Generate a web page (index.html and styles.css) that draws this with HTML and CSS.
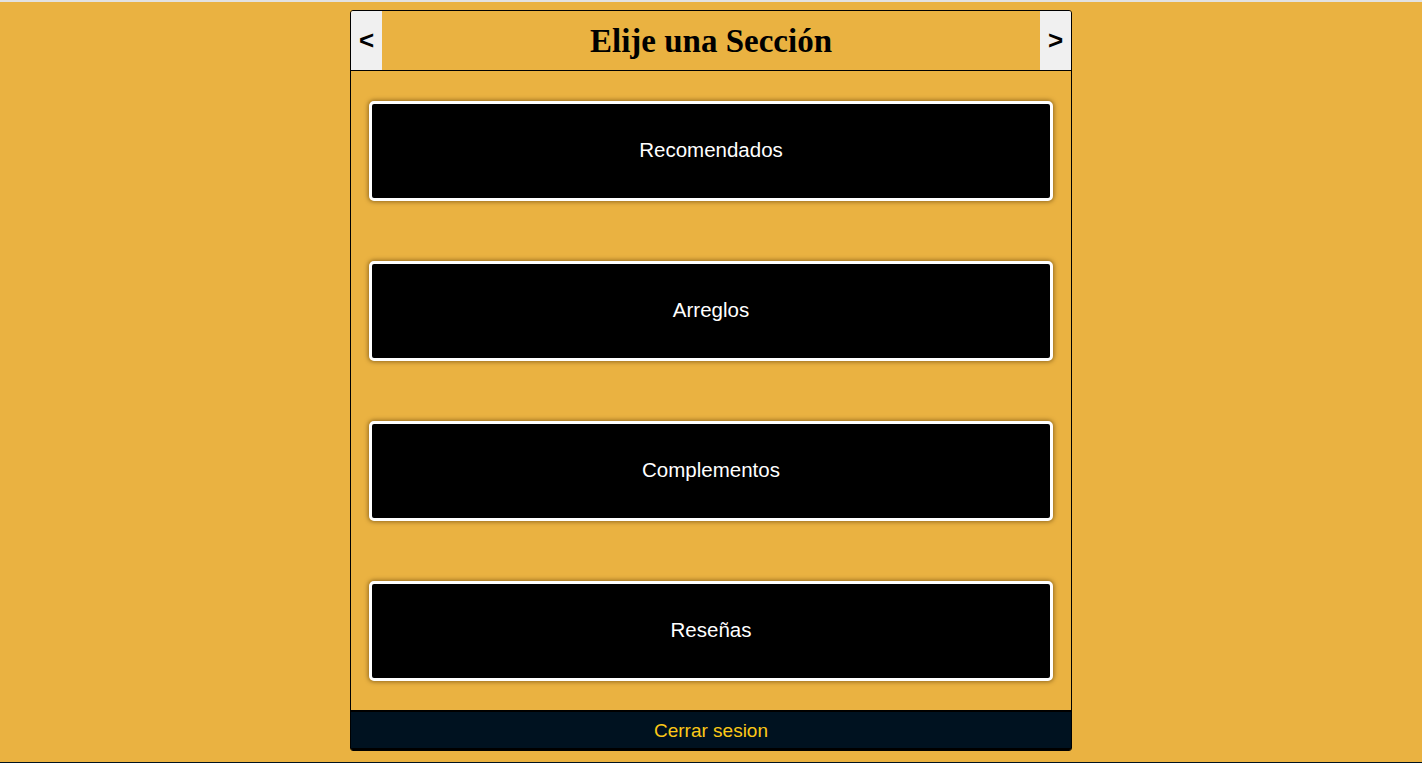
FILE: index.html
```html
<!DOCTYPE html>
<html lang="es">
<head>
<meta charset="utf-8">
<title>Elije una Sección</title>
<link rel="stylesheet" href="styles.css">
</head>
<body>
<div class="panel">
  <header class="panel-head">
    <button class="nav-btn">&lt;</button>
    <h1 class="title">Elije una Sección</h1>
    <button class="nav-btn">&gt;</button>
  </header>
  <main class="sections">
    <button class="section-btn">Recomendados</button>
    <button class="section-btn">Arreglos</button>
    <button class="section-btn">Complementos</button>
    <button class="section-btn">Reseñas</button>
  </main>
  <footer class="panel-foot">
    <a class="logout" href="#">Cerrar sesion</a>
  </footer>
</div>
</body>
</html>
```
FILE: styles.css
```css
* { box-sizing: border-box; }
html { background: #eab241; }
body {
  margin: 0;
  height: 763px;
  background: #eab241;
  border-top: 2px solid #e2e2e2;
  border-bottom: 1px solid #001220;
  font-family: "Liberation Sans", Arial, sans-serif;
  padding-top: 8px;
}
.panel {
  width: 722px;
  margin: 0 auto;
  border: 1px solid #000;
  border-radius: 3px;
  display: flex;
  flex-direction: column;
  overflow: hidden;
}
.panel-head {
  height: 60px;
  display: flex;
  align-items: stretch;
  border-bottom: 1px solid #000;
}
.nav-btn {
  width: 31px;
  border: none;
  background: #f0f0f0;
  font-family: "Liberation Sans", Arial, sans-serif;
  font-weight: bold;
  font-size: 26px;
  color: #000;
  padding: 0;
}
.title {
  flex: 1;
  margin: 0;
  padding-top: 2px;
  text-align: center;
  font-family: "Liberation Serif", "Times New Roman", serif;
  font-size: 33px;
  font-weight: bold;
  line-height: 57px;
}
.sections {
  display: flex;
  flex-direction: column;
  align-items: center;
  gap: 60px;
  padding: 30px 0 29px;
}
.section-btn {
  width: 684px;
  height: 100px;
  background: #000;
  color: #fff;
  border: 3px solid #fff;
  border-radius: 5px;
  box-shadow: 0 0 4px 1px rgba(80, 50, 0, 0.55);
  font-family: "Liberation Sans", Arial, sans-serif;
  font-size: 20.5px;
  padding: 0 0 2px;
}
.panel-foot {
  height: 40px;
  background: #001220;
  border-top: 2px solid #000;
  border-bottom: 2px solid #000;
  display: flex;
  align-items: center;
  justify-content: center;
  padding-top: 1px;
}
.logout {
  color: #fcc917;
  text-decoration: none;
  font-size: 19px;
}
```
